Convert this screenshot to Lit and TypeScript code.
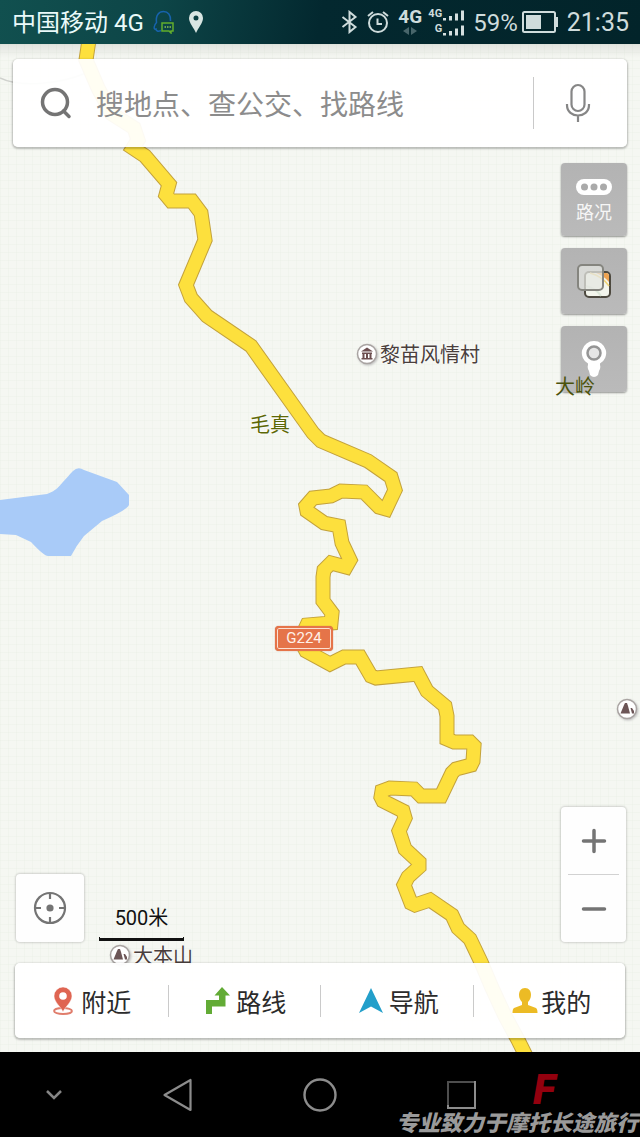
import { LitElement, html, svg, css } from "lit";
import { customElement, property } from "lit/decorators.js";

const ROAD =
  "M89 40 L86 60 L98 88 L112 114 L134 128 L138 140 L133 148 L145 156 L169 184 L166 195 L171 201 L192 201 L201 213 L205 240 L186 285 L191 298 L207 316 L251 346 L313 433 L321 441 L368 461 L391 477 L395 490 L386 509 L379 507 L364 492 L341 491 L331 496 L313 498 L306 506 L307 511 L324 523 L339 526 L342 543 L350 560 L346 567 L331 563 L324 570 L323 577 L323 601 L332 613 L331 623 L307 625 L300 640 L306 651 L330 664 L344 657 L360 657 L371 676 L376 678 L418 674 L427 691 L445 706 L447 716 L447 739 L454 742 L470 742 L474 746 L473 761 L471 765 L456 769 L452 773 L441 796 L421 796 L414 789 L390 788 L382 791 L381 797 L383 801 L403 811 L405 818 L399 831 L405 849 L419 862 L419 867 L408 877 L404 885 L411 903 L415 905 L430 900 L452 915 L458 928 L470 939 L481 962 L492 988 L505 1016 L518 1040 L530 1064";

const mountain = svg`
  <circle cx="11" cy="11" r="9.5" fill="#fff" stroke="#a9a4a2" stroke-width="1.5"/>
  <path d="M4.5 15.500 L8 7 L9 5 H11 L12 8 L14 15.500 Z M14.500 10 L16 10 L18 13 V15.500 L16 15.500 Z" fill="#6d5657"/>`;

const temple = svg`
  <circle cx="11" cy="11" r="9.5" fill="#fff" stroke="#a9a4a2" stroke-width="1.5"/>
  <path d="M11 4.5 L17 8.5 H5 Z M6 9.5 h10 v1.5 H6 Z M6.5 11 h2 v4 h-2 Z M10 11 h2 v4 h-2 Z M13.5 11 h2 v4 h-2 Z M5.5 15 h11 v1.5 h-11 Z" fill="#6d4f50"/>`;

@customElement("status-bar")
export class StatusBar extends LitElement {
  static styles = css`
    :host {
      display: flex;
      justify-content: space-between;
      align-items: center;
      height: 44px;
      padding: 0 11px 0 12px;
      box-sizing: border-box;
      background: linear-gradient(100deg, #11504f 0%, #0d4547 25%, #03282f 50%, #02242a 100%);
      color: #cfdcdc;
      font: 24px/44px Roboto, "Noto Sans CJK SC", sans-serif;
      white-space: nowrap;
    }
    .side { display: flex; align-items: center; }
    .carrier { color: #eafafa; margin-right: 9px; padding-top: 2px; }
    .pin { margin-left: 13px; }
    .alarm { margin: 0 9px; }
    .mode { display: flex; flex-direction: column; align-items: center; font-size: 19px; font-weight: 700; line-height: 20px; margin-right: 5px; padding-bottom: 2px; }
    .signal { display: grid; grid-template-columns: 15px 21px; column-gap: 1px; margin-right: 9px; font-size: 11px; font-weight: 700; line-height: 15px; text-align: right; align-items: end; padding-bottom: 2px; }
    .percent { padding-top: 2px; }
    .clock { font-size: 25px; margin-left: 8px; padding-top: 2px; }
    .battery { margin-left: 4px; }
    svg { display: block; }
  `;
  render() {
    const bars = html`<svg width="21" height="15" viewBox="0 0 21 15" fill="#d5dfdf"><path d="M0 12h3v2.500H0zM6 10h3v4.500h-3zM12 7.500h3v7h-3zM18 4.500h3v10h-3z"/></svg>`;
    return html`
      <div class="side">
        <span class="carrier">中国移动 4G</span>
        <svg width="22" height="24" viewBox="0 0 22 24" fill="none">
          <path d="M8 20.500 C5 22 3 21 3 19 C0 20 1 15 3.500 12.500 C2.500 5 6 1.500 10.500 1.500 C15 1.500 18 5 17.500 11" stroke="#1763ad" stroke-width="1.500"/>
          <path d="M9 13 H20 V21 H18 V23 L16 21 H9 Z" stroke="#62ad2d" stroke-width="1.500"/>
          <path d="M11.500 17h1.500M14 17h1.500M16.500 17h1.500" stroke="#8ac354" stroke-width="1.600"/>
        </svg>
        <svg class="pin" width="16" height="24" viewBox="0 0 16 24">
          <path fill="#d8e5e2" fill-rule="evenodd" d="M8 1 A7 7 0 0 1 15 8 C15 13 10 18 8 23 C6 18 1 13 1 8 A7 7 0 0 1 8 1 Z M8 5.500 A2.500 2.500 0 1 0 8 10.500 A2.500 2.500 0 1 0 8 5.500 Z"/>
        </svg>
      </div>
      <div class="side">
        <svg width="17" height="24" viewBox="0 0 17 24" fill="none" stroke="#cfdcdc" stroke-width="2">
          <path d="M1.500 7 L14.500 17 L8.500 22 V2 L14.500 7 L1.500 17"/>
        </svg>
        <svg class="alarm" width="22" height="24" viewBox="0 0 22 24" fill="none" stroke="#cfdcdc" stroke-width="2">
          <circle cx="11" cy="13" r="9"/><path d="M10.500 8.500 V14 H15 M1 6 L6 2 M21 6 L16 2"/>
        </svg>
        <span class="mode">4G
          <svg width="14" height="8" viewBox="0 0 14 8" fill="#48666b"><path d="M0 4 L6 0 V8 Z M14 4 L8 0 V8 Z"/></svg>
        </span>
        <span class="signal"><span>4G</span>${bars}<span>G</span>${bars}</span>
        <span class="percent">59%</span>
        <svg class="battery" width="37" height="24" viewBox="0 0 37 24">
          <rect x="1" y="2" width="32" height="20" rx="1.500" fill="none" stroke="#cfdcdc" stroke-width="2"/>
          <path d="M4 5h15v14H4z M34 7h2v10h-2z" fill="#cfdcdc"/>
        </svg>
        <span class="clock">21:35</span>
      </div>`;
  }
}

@customElement("map-pin")
export class MapPin extends LitElement {
  @property() icon = "";
  @property() label = "";
  static styles = css`
    :host { display: flex; align-items: center; gap: 2px; color: #4a3f3d; font: 20px/24px "Noto Sans CJK SC", sans-serif; white-space: nowrap;
      text-shadow: 0 0 2px #fff, 0 0 2px #fff; }
    svg { display: block; filter: drop-shadow(1px 1px 1px #bbb); }
  `;
  render() {
    return html`${this.icon
      ? html`<svg width="22" height="22" viewBox="0 0 22 22">${this.icon === "temple" ? temple : mountain}</svg>`
      : ""}${this.label ? html`<span>${this.label}</span>` : ""}`;
  }
}

@customElement("map-canvas")
export class MapCanvas extends LitElement {
  static styles = css`
    :host {
      display: block;
      position: relative;
      overflow: hidden;
      background-color: #f5f7f2;
      background-image: linear-gradient(#00000014, transparent 14px),
        repeating-linear-gradient(90deg, #e9efe560 0 1px, transparent 1px 8px),
        repeating-linear-gradient(#e9efe560 0 1px, transparent 1px 8px);
    }
    .drawing { position: absolute; left: 0; top: 0; display: block; }
    map-pin, .shield { position: absolute; }
    .village { left: 356px; top: 298px; }
    .mao { left: 250px; top: 368px; color: #5c6806; }
    .peak { left: 616px; top: 654px; }
    .daben { left: 109px; top: 899px; }
    .shield {
      left: 275px; top: 582px; width: 58px; height: 25px; box-sizing: border-box;
      border: 2px solid #e57449; border-radius: 4px; background: #e57449;
      box-shadow: inset 0 0 0 1px #fbe0d2, 0 0 1px #b8562f;
      color: #fff1e8; font: 15px/21px Roboto, sans-serif; text-align: center;
    }
  `;
  render() {
    return html`
      <svg class="drawing" width="640" height="1008" viewBox="0 44 640 1008" fill="none" stroke-linejoin="bevel" aria-hidden="true">
        <path d="M0 78 C20 88 60 84 86 73" stroke="#cfd1cd" stroke-width="1.500"/>
        <path d="M0 500 L47 494 C58 490 58 487 73 471 Q78 466 84 470 L117 482 L129 495 V505 Q127 510 102 521 L84 536 Q76 546 71 556 H48 Q44 556 31 542 L16 535 L0 534 Z" fill="#a9cbf8"/>
        <path d="${ROAD}" stroke="#c3a23c" stroke-width="15" stroke-linejoin="miter"/>
        <path d="${ROAD}" stroke="#fde03d" stroke-width="13" stroke-linejoin="miter"/>
      </svg>
      <map-pin class="village" icon="temple" label="黎苗风情村"></map-pin>
      <map-pin class="mao" label="毛真"></map-pin>
      <map-pin class="peak" icon="mountain"></map-pin>
      <map-pin class="daben" icon="mountain" label="大本山"></map-pin>
      <span class="shield">G224</span>`;
  }
}

@customElement("map-controls")
export class MapControls extends LitElement {
  static styles = css`
    :host {
      display: flex; flex-direction: column; box-sizing: border-box;
      padding: 15px 13px 14px; min-width: 0;
      font-family: Roboto, "Noto Sans CJK SC", sans-serif;
    }
    svg { display: block; flex: none; }
    button { border: 0; padding: 0; margin: 0; background: none; font: inherit; color: inherit; display: flex; align-items: center; justify-content: center; }
    .card { background: #fffffff0; border-radius: 5px; box-shadow: 0 1px 2px 1px #0000003d; }
    .search { display: flex; align-items: center; height: 88px; }
    .search label { display: flex; align-items: center; flex: 1; min-width: 0; padding-left: 27px; gap: 24px; }
    input { flex: 1; min-width: 0; border: 0; padding: 0; background: none; outline: none; color: #555; font: 28px/40px "Noto Sans CJK SC", sans-serif; }
    input::placeholder { color: #8c8c8c; opacity: 1; }
    .voice { width: 94px; height: 52px; border-left: 1px solid #c9c9c9; padding-right: 5px; }
    .tools { display: flex; flex-direction: column; gap: 12px; align-self: flex-end; width: 66px; margin-top: 16px; }
    .tool { height: 66px; border-radius: 4px; background: linear-gradient(#b3b3b3, #bababa); box-shadow: 0 1px 2px #00000066; color: #f6f6f6; }
    .traffic { height: 73px; flex-direction: column; gap: 6px; padding-top: 4px; font-size: 18px; line-height: 24px; }
    .lower { display: flex; align-items: flex-end; margin: auto 0 21px; padding: 0 1px 0 3px; }
    .locate { width: 68px; height: 68px; }
    .soft { background: #fefefe; border-radius: 4px; box-shadow: 0 0 2px 1px #00000026; }
    .scale { margin-left: 15px; width: 85px; text-align: center; color: #111; font-size: 20px; line-height: 24px; padding-bottom: 1px; }
    .rule { height: 4px; margin-top: 7px; border: solid #111; border-width: 0 1px 3px; box-sizing: border-box; }
    .zoom { margin-left: auto; width: 65px; }
    .zoom button { width: 100%; height: 67px; }
    .zoom hr { margin: 0 7px; border: 0; height: 1px; background: #d2d2d2; }
    .tabs { display: grid; grid-template-columns: repeat(4, 1fr); align-items: center; margin: 0 2px; height: 75px; color: #2b2b2b; font-size: 25px; line-height: 32px; }
    .tab { height: 32px; display: flex; align-items: center; justify-content: center; gap: 2px; color: inherit; text-decoration: none; font-family: "Noto Sans CJK SC", sans-serif; }
    .tab + .tab { padding-left: 4px; border-left: 1px solid #cacaca; }
  `;
  render() {
    return html`
      <form class="card search" @submit=${(e: Event) => e.preventDefault()}>
        <label>
          <svg width="32" height="34" viewBox="0 0 32 34" fill="none" stroke="#747474" stroke-width="3.500" stroke-linecap="round"><circle cx="15" cy="16" r="12.500"/><path d="M23.500 25 L29 30.500"/></svg>
          <input type="search" aria-label="搜地点、查公交、找路线" placeholder="搜地点、查公交、找路线" />
        </label>
        <button class="voice" type="button" aria-label="语音">
          <svg width="26" height="40" viewBox="0 0 26 40" fill="none" stroke="#868686" stroke-width="2.200"><rect x="6.500" y="2" width="13" height="26" rx="6.500"/><path d="M2 21 V22 C2 36 24 36 24 22 V21 M13 32.500 V39"/></svg>
        </button>
      </form>
      <div class="tools">
        <button class="tool traffic">
          <svg width="36" height="16" viewBox="0 0 36 16"><rect width="36" height="16" rx="8" fill="#fff"/><g fill="#aaa"><circle cx="8.500" cy="8" r="3.500"/><circle cx="18" cy="8" r="3.500"/><circle cx="27.500" cy="8" r="3.500"/></g></svg>
          路况
        </button>
        <button class="tool" aria-label="图层">
          <svg width="34" height="34" viewBox="0 0 34 34">
            <rect x="8" y="8" width="25" height="25" rx="4" fill="#f3f5ec" stroke="#4d493f" stroke-width="2"/>
            <path d="M19 9 H29 Q32 9 32 12 V18 Q27 12 19 9 Z" fill="#eea352"/><path d="M13 9 Q25 12 32 22" stroke="#f0d374" stroke-width="1.500" fill="none"/><path d="M9 22 Q20 25 24 32" stroke="#dce7d8" stroke-width="2" fill="none"/>
            <rect x="1" y="1" width="25" height="25" rx="4" fill="#e4e5e1" fill-opacity=".75" stroke="#85857f" stroke-width="2"/>
          </svg>
        </button>
        <button class="tool" aria-label="街景">
          <svg width="26" height="38" viewBox="0 0 26 38"><path d="M13 1 A12 12 0 0 1 19 23.500 V25 Q20 28 18 31 L17 35 Q13 39 9 35 L8 31 Q6 28 7 25 V23.500 A12 12 0 0 1 13 1 Z" fill="#fff"/><circle cx="13" cy="13" r="6.500" fill="#e6e6e6" stroke="#959595" stroke-width="2.500"/></svg>
        </button>
      </div>
      <div class="lower">
        <button class="soft locate" aria-label="定位">
          <svg width="34" height="34" viewBox="0 0 34 34" fill="none" stroke="#747474" stroke-width="2.200"><circle cx="17" cy="17" r="15"/><path d="M17 2v6M17 26v6M2 17h6M26 17h6"/><circle cx="17" cy="17" r="3.600" fill="#747474" stroke="none"/></svg>
        </button>
        <div class="scale">500米<div class="rule"></div></div>
        <div class="soft zoom">
          <button aria-label="放大"><svg width="26" height="26" viewBox="0 0 26 26" stroke="#747474" stroke-width="3.500" stroke-linecap="round"><path d="M2.500 13h21M13 2.500v21"/></svg></button>
          <hr />
          <button aria-label="缩小"><svg width="26" height="26" viewBox="0 0 26 26" stroke="#747474" stroke-width="3.500" stroke-linecap="round"><path d="M2.500 13h21"/></svg></button>
        </div>
      </div>
      <nav class="card tabs">
        <a class="tab" href="#nearby">
          <svg width="28" height="30" viewBox="0 0 28 30"><ellipse cx="12" cy="25" rx="9" ry="3" fill="none" stroke="#e07d6c" stroke-width="1.800"/><path d="M12 1 A9 9 0 0 1 21 10 C21 16 14 21 12 26 C10 21 3 16 3 10 A9 9 0 0 1 12 1 Z" fill="#df6552" stroke="#fff" stroke-width=".5"/><circle cx="12" cy="10" r="3.800" fill="#fff"/></svg>附近</a>
        <a class="tab" href="#route">
          <svg width="28" height="30" viewBox="0 0 28 30"><path d="M0 28 V14 H13 V9.500 H8.500 L16 1 L24 9.500 H19.500 V20.500 H6 V28 Z" fill="#62ab35"/></svg>路线</a>
        <a class="tab" href="#navigate">
          <svg width="28" height="30" viewBox="0 0 28 30"><path d="M12 2 L24 27 L12 20.500 L0 27 Z" fill="#239fca"/></svg>导航</a>
        <a class="tab" href="#mine">
          <svg width="28" height="30" viewBox="0 0 28 30"><path d="M14 2 C18 2 20 5 20 9 C20 12 18.500 14.500 17 16 V19 L25 22 Q26.500 23 26.500 27 H1.500 Q1.500 23 3 22 L11 19 V16 C9.500 14.500 8 12 8 9 C8 5 10 2 14 2 Z" fill="#ecbb25"/></svg>我的</a>
      </nav>`;
  }
}

@customElement("system-nav")
export class SystemNav extends LitElement {
  static styles = css`
    :host { display: grid; position: relative; grid-template-columns: 107fr 142fr 142fr 142fr 107fr; height: 85px; background: #000; overflow: hidden; }
    button { border: 0; padding: 0; background: none; display: flex; align-items: center; justify-content: center; }
    svg { display: block; }
    .mark { position: absolute; right: 2px; bottom: 0; display: flex; flex-direction: column; align-items: flex-end; pointer-events: none; }
    .logo { margin-right: 80px; }
    .slogan { color: #9a9a9a; font: italic 900 22px/32px "Noto Sans CJK SC", sans-serif; white-space: nowrap; }
  `;
  render() {
    return html`
      <button aria-label="收起"><svg width="20" height="14" viewBox="0 0 20 14" fill="none" stroke="#858585" stroke-width="2.500"><path d="M3 3 L10 10 L17 3"/></svg></button>
      <button aria-label="返回"><svg width="32" height="34" viewBox="0 0 32 34" fill="none" stroke="#8c8c8c" stroke-width="2.200" stroke-linejoin="round"><path d="M2.500 17 L28.500 2 V32 Z"/></svg></button>
      <button aria-label="主页"><svg width="36" height="36" viewBox="0 0 36 36" fill="none" stroke="#8c8c8c" stroke-width="2.400"><circle cx="18" cy="18" r="15.500"/></svg></button>
      <button aria-label="最近任务"><svg width="30" height="30" viewBox="0 0 30 30" fill="none" stroke-width="2"><path d="M1 26 V2 H28" stroke="#4e4e4e"/><path d="M28 1 V28 H1 V25" stroke="#8c8c8c"/></svg></button>
      <div class="mark">
        <svg class="logo" width="24" height="32" viewBox="0 0 24 32" overflow="visible"><text x="-1" y="31" font-family="Roboto" font-size="42" font-weight="900" font-style="italic" fill="#93000e">F</text></svg>
        <span class="slogan">专业致力于摩托长途旅行</span>
      </div>`;
  }
}

@customElement("app-root")
export class AppRoot extends LitElement {
  static styles = css`
    :host { display: flex; flex-direction: column; min-height: 100vh; background: #000; }
    main { flex: 1; display: grid; grid-template-columns: minmax(0, 1fr); position: relative; overflow: hidden; }
    map-canvas, map-controls { grid-area: 1 / 1; }
    map-controls { position: relative; }
    .ridge { position: absolute; left: 555px; top: 330px; color: #4b520b; text-shadow: none; pointer-events: none; }
  `;
  render() {
    return html`
      <status-bar></status-bar>
      <main>
        <map-canvas></map-canvas>
        <map-controls></map-controls>
        <map-pin class="ridge" label="大岭"></map-pin>
      </main>
      <system-nav></system-nav>`;
  }
}
